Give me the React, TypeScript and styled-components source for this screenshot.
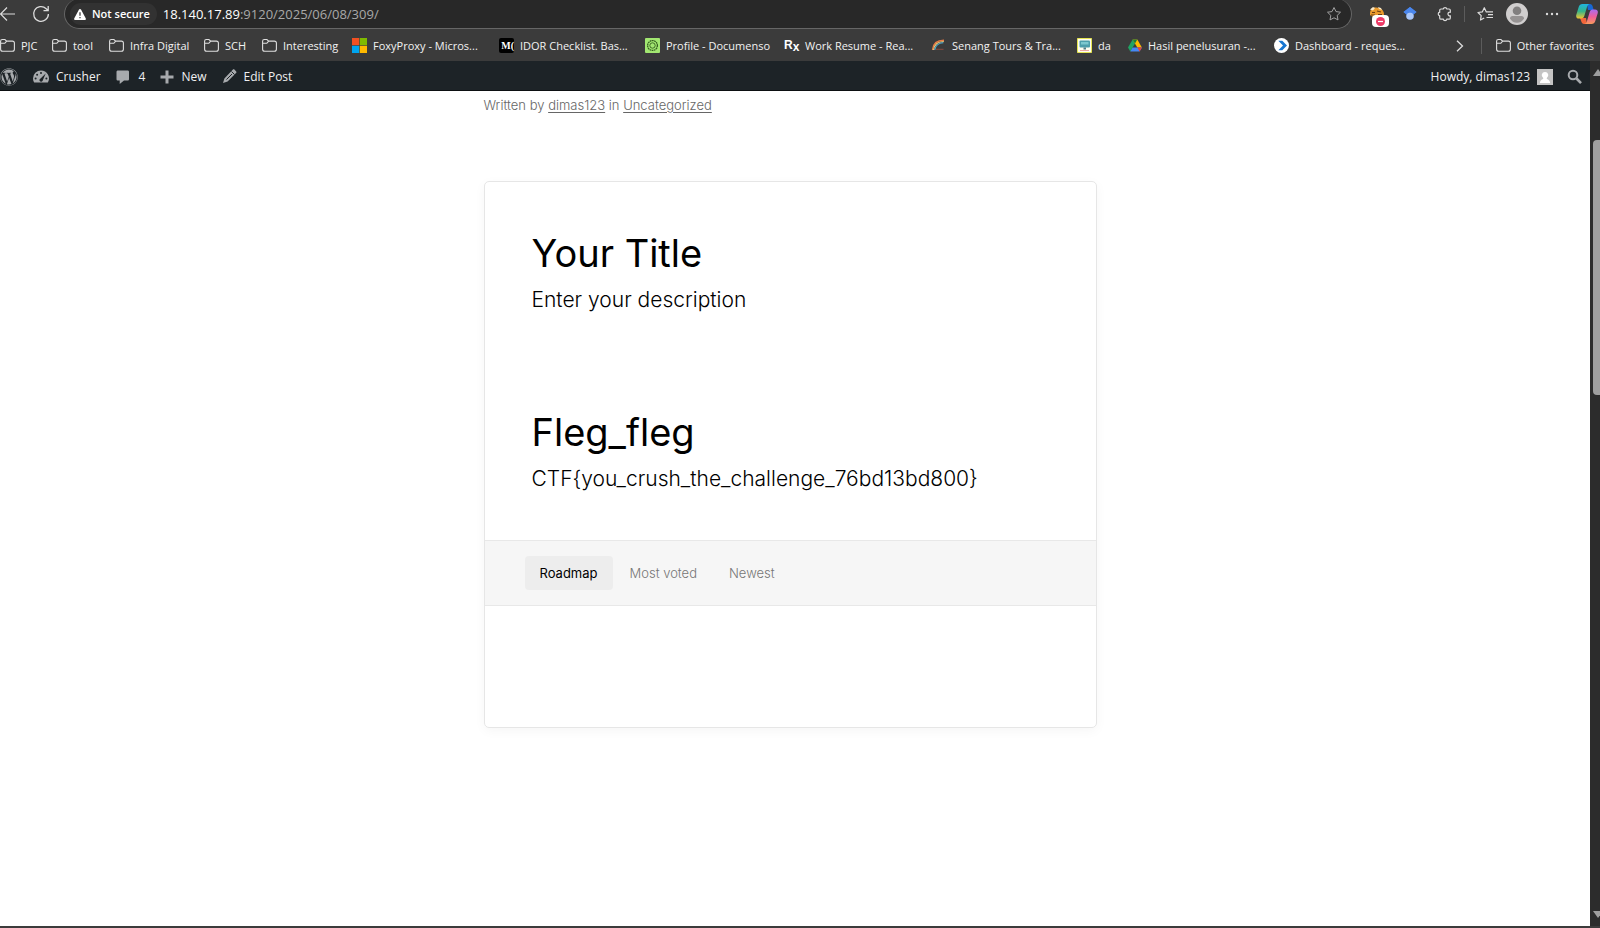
import React from "react";
import styled, { createGlobalStyle } from "styled-components";
import { FaWordpress } from "react-icons/fa";

const GlobalStyle = createGlobalStyle`
  *, *::before, *::after { box-sizing: border-box; }
  body { margin: 0; background: #fff; overflow: hidden; }
  button, input { font: inherit; color: inherit; }
  a { color: inherit; text-decoration: none; }
  h2, p { margin: 0; font-weight: inherit; }
  svg { display: block; flex: none; }
`;

const ui = `"Open Sans", "Noto Sans", sans-serif`;

const Shell = styled.div`
  display: flex;
  flex-direction: column;
  height: 100vh;
  overflow: hidden;
  background: #3b3b3b;
  color: #f2f2f2;
  font-family: ${ui};
  font-size: 11px;
  line-height: 16px;
`;

const Toolbar = styled.div`
  display: flex;
  align-items: flex-start;
  height: 28px;
  flex: none;
`;

const IconButton = styled.button<{ $w: number }>`
  display: flex;
  align-items: center;
  justify-content: center;
  flex: none;
  width: ${(p) => p.$w}px;
  height: 28px;
  padding: 0;
  border: 0;
  background: none;
  color: #dcdcdc;
`;

const AddressBar = styled.form`
  display: flex;
  align-items: center;
  flex: 1;
  height: 30px;
  margin: -1px 0 0 7px;
  padding: 1px 9px 0 5px;
  border: 1px solid #666;
  border-top: 0;
  border-radius: 15px;
  background: #282828;
`;

const Security = styled.button`
  display: flex;
  align-items: center;
  gap: 6px;
  height: 22px;
  padding: 0 7px 0 4px;
  border: 0;
  border-radius: 11px;
  background: #323232;
  color: #fff;
  font-size: 11px;
  font-weight: 600;
`;

const Url = styled.div`
  flex: 1;
  margin-left: 6px;
  color: #a8a8a8;
  font-size: 13px;
  b { color: #fff; font-weight: 400; }
`;

const Divider = styled.span`
  flex: none;
  width: 1px;
  height: 16px;
  background: #5c5c5c;
`;

const ToolbarEnd = styled.div`
  display: flex;
  align-items: center;
  height: 28px;
  padding-left: 8px;
`;

const Extension = styled(IconButton)`
  position: relative;
`;

const Badge = styled.span`
  position: absolute;
  left: 12px;
  top: 15px;
  display: flex;
  justify-content: center;
  align-items: center;
  width: 17px;
  height: 12px;
  border-radius: 4px;
  background: #fff;
`;

const Bookmarks = styled.nav`
  display: flex;
  align-items: center;
  flex: none;
  height: 33px;
  padding: 2px 6px 0 0;
`;

const BookmarkList = styled.div`
  display: flex;
  flex: 1;
  gap: 15px;
  min-width: 0;
  overflow: hidden;
`;

const Bookmark = styled.a<{ $w?: number }>`
  display: flex;
  align-items: center;
  flex: none;
  gap: 6px;
  width: ${(p) => (p.$w ? p.$w + "px" : "auto")};
  white-space: nowrap;
`;

const MediumMark = styled.span`
  flex: none;
  width: 15px;
  height: 15px;
  border-radius: 2px;
  background: #000;
  color: #fff;
  font: 700 10px/15px "Liberation Serif", serif;
  text-align: right;
`;

const RxMark = styled.span`
  flex: none;
  width: 15px;
  color: #fff;
  font: 700 12px/15px "Liberation Sans", sans-serif;
  sub { font-size: 12px; line-height: 8px; vertical-align: -2px; }
`;

const Viewport = styled.div`
  display: flex;
  flex: 1;
  min-height: 0;
  border-bottom: 2px solid #3c3c3c;
`;

const Page = styled.div`
  flex: 1;
  min-width: 0;
  background: #fff;
  color: #000;
  font-family: Inter, sans-serif;
`;

const AdminBar = styled.header`
  display: flex;
  align-items: center;
  justify-content: space-between;
  height: 30px;
  padding: 2px 7px 0 0;
  border-bottom: 1px solid #0c0f12;
  background: #1d2327;
  color: #f0f0f1;
  font: 12px/16px ${ui};
`;

const AdminGroup = styled.div<{ $gap: number }>`
  display: flex;
  align-items: center;
  gap: ${(p) => p.$gap}px;
`;

const AdminLink = styled.a<{ $gap?: number }>`
  display: flex;
  align-items: center;
  gap: ${(p) => p.$gap ?? 7}px;
  svg { color: #a7aaad; }
`;

const Article = styled.main`
  width: 100%;
  max-width: 623px;
  margin: 0 auto;
  padding-right: 10px;
`;

const Byline = styled.p`
  padding-top: 4px;
  color: #666;
  font-size: 13px;
  font-weight: 300;
  line-height: 20px;
  a { text-decoration: underline; text-underline-offset: 2px; }
`;

const Card = styled.section`
  margin-top: 66px;
  border: 1px solid #e6e6e6;
  border-radius: 5px;
  box-shadow: 0 3px 12px rgba(0, 0, 0, 0.04);
`;

const Intro = styled.div`
  display: grid;
  gap: 86px;
  padding: 46px 47px 40px;
`;

const Title = styled.h2`
  font-size: 38px;
  font-weight: 400;
  line-height: 51px;
`;

const Description = styled.p`
  font-size: 21px;
  font-weight: 300;
  line-height: 42px;
`;

const Tabs = styled.div`
  display: flex;
  align-items: center;
  gap: 2px;
  height: 66px;
  padding-left: 40px;
  border: solid #e8e8e8;
  border-width: 1px 0;
  background: #f6f6f6;
`;

const Tab = styled.button<{ $active?: boolean }>`
  height: 34px;
  padding: 0 15px;
  border: 0;
  border-radius: 4px;
  background: ${(p) => (p.$active ? "#ededed" : "none")};
  color: ${(p) => (p.$active ? "#000" : "#777")};
  font-size: 13px;
  font-weight: ${(p) => (p.$active ? 400 : 300)};
`;

const Panel = styled.div`
  height: 121px;
`;

const Scrollbar = styled.div`
  display: flex;
  flex-direction: column;
  align-items: flex-start;
  flex: none;
  width: 10px;
  padding: 8px 0 8px 3px;
  overflow: hidden;
  background: #2c2c2c;
`;

const Thumb = styled.div`
  width: 7px;
  height: 30%;
  margin: 64px 0 auto;
  border-radius: 4px 0 0 4px;
  background: #9f9f9f;
`;

const Folder = () => (
  <svg width="15" height="15" viewBox="0 0 15 15" fill="none" stroke="#dedede" strokeWidth="1.1">
    <path d="M.6 3.2c0-1.100.7-1.700 1.700-1.700h2.600l1.800 1.600h5.600c1.200 0 2.100.8 2.100 2v6.100c0 1.200-.9 2-2.100 2H2.700c-1.200 0-2.100-.8-2.100-2zM.6 5.300h4.200l1.900-2.200" />
  </svg>
);
const Microsoft = () => (
  <svg width="15" height="15" viewBox="0 0 15 15">
    <path fill="#f25022" d="M0 0h7.200v7.200H0z" /><path fill="#7fba00" d="M7.800 0H15v7.200H7.800z" />
    <path fill="#00a4ef" d="M0 7.800h7.200V15H0z" /><path fill="#ffb900" d="M7.800 7.800H15V15H7.800z" />
  </svg>
);
const Documenso = () => (
  <svg width="15" height="15" viewBox="0 0 15 15" fill="none" stroke="#355e20">
    <rect width="15" height="15" rx="1" fill="#a2e771" stroke="none" />
    <circle cx="7.500" cy="7.500" r="4.900" strokeWidth="1.300" strokeDasharray="1.700 .5" />
    <circle cx="7.500" cy="7.500" r="2.700" strokeWidth=".9" />
  </svg>
);
const Rainbow = () => (
  <svg width="15" height="15" viewBox="0 0 15 15" fill="none">
    <path d="M1.500 12C2 6 6 2.300 13 2.300" stroke="#e97a45" strokeWidth="1.400" />
    <path d="M2.600 12C3.200 7 7 3.600 12.800 3.500" stroke="#f2d27a" strokeWidth="1.200" />
    <path d="M3.700 12C4.200 8 7.500 4.900 12.300 4.600" stroke="#4fa5c9" strokeWidth="1.200" />
    <path d="M5 11.300h7.500" stroke="#8b4a40" />
  </svg>
);
const Monitor = () => (
  <svg width="15" height="15" viewBox="0 0 15 15">
    <path fill="#fffdf0" stroke="#e4e450" d="M.5.5h14v14H.500z" />
    <rect x="2.500" y="2.500" width="10.500" height="7" rx="1" fill="#4d9fac" />
    <path fill="#7cc8cf" d="M4 4h7.500v2.500H4z" /><path fill="#517d86" d="M6.500 9.500h2.500v2h-2.500z" />
    <path fill="#eba7a2" d="M3 12h9v1H3z" />
  </svg>
);
const Drive = () => (
  <svg width="14" height="15" viewBox="0 0 14 15">
    <path fill="#1fa463" d="M4.600 1.500 0 9.400l2.300 4L7 5.500z" /><path fill="#ffba00" d="M4.600 1.500h4.700l4.600 8H9.300z" />
    <path fill="#4688f4" d="M4.600 9.500h9.300l-2.300 4H2.300z" /><path fill="#ea4335" d="M9.300 9.500h4.600l-2.300 4z" />
    <path fill="#188038" d="M4.600 1.500h4.700L7 5.500z" />
  </svg>
);
const BlueArrow = () => (
  <svg width="15" height="15" viewBox="0 0 15 15">
    <circle cx="7.500" cy="7.500" r="7.500" fill="#fff" />
    <path fill="#1675d1" d="M4.300 2.800h4L13 7.500l-4.700 4.700h-4L9 7.500z" />
  </svg>
);
const Warning = () => (
  <svg width="12" height="11" viewBox="0 0 12 11">
    <path fill="#fff" d="M6 0c.5 0 .8.200 1 .6l4.700 8.700c.4.800 0 1.700-1 1.700H1.300c-1 0-1.400-.9-1-1.700L5 .6c.2-.4.500-.6 1-.6z" />
    <path stroke="#323232" strokeWidth="1.200" d="M6 3.300v3.400M6 8v1.300" />
  </svg>
);
const starPath = "M8 1.500l2 4.100 4.500.6-3.300 3.200.8 4.500L8 11.800l-4 2.100.8-4.500L1.500 6.200 6 5.600z";
const Star = () => (
  <svg width="16" height="16" viewBox="0 0 16 16" fill="none" stroke="#a0a0a0" strokeLinejoin="round"><path d={starPath} /></svg>
);

const bookmarks: { label: string; icon: React.ReactNode; width?: number }[] = [
  { label: "PJC", icon: <Folder />, width: 37 },
  { label: "tool", icon: <Folder />, width: 42 },
  { label: "Infra Digital", icon: <Folder />, width: 80 },
  { label: "SCH", icon: <Folder />, width: 43 },
  { label: "Interesting", icon: <Folder />, width: 75 },
  { label: "FoxyProxy - Micros...", icon: <Microsoft />, width: 132 },
  { label: "IDOR Checklist. Bas...", icon: <MediumMark aria-hidden="true">M(</MediumMark>, width: 131 },
  { label: "Profile - Documenso", icon: <Documenso />, width: 124 },
  { label: "Work Resume - Rea...", icon: <RxMark>R<sub>x</sub></RxMark>, width: 132 },
  { label: "Senang Tours & Tra...", icon: <Rainbow />, width: 131 },
  { label: "da", icon: <Monitor />, width: 36 },
  { label: "Hasil penelusuran -...", icon: <Drive />, width: 131 },
  { label: "Dashboard - reques...", icon: <BlueArrow />, width: 131 },
];

const sections = [
  { title: "Your Title", text: "Enter your description" },
  { title: "Fleg_fleg", text: "CTF{you_crush_the_challenge_76bd13bd800}" },
];

export default function App() {
  return (
    <>
      <GlobalStyle />
      <Shell>
        <Toolbar>
          <IconButton $w={24} aria-label="Back">
            <svg width="24" height="16" viewBox="0 0 24 16" fill="none" stroke="currentColor" strokeWidth="1.200"><path d="M15 8H0M7 1.500.5 8 7 14.500" /></svg>
          </IconButton>
          <IconButton $w={33} aria-label="Refresh">
            <svg width="18" height="18" viewBox="0 0 18 18" fill="none" stroke="currentColor" strokeWidth="1.300"><path d="M16.400 9A7.400 7.400 0 1 1 14.200 3.700L16 5.500M16.200 1v4.700h-4.700" /></svg>
          </IconButton>
          <AddressBar>
            <Security type="button"><Warning />Not secure</Security>
            <Url><b>18.140.17.89</b>:9120/2025/06/08/309/</Url>
            <Star />
          </AddressBar>
          <ToolbarEnd>
            <Extension $w={34} aria-label="Cookie extension">
              <svg width="16" height="16" viewBox="0 0 16 16">
                <path fill="#e99a2c" d="M1 7c0-3 2-5.500 6-5.500 5 0 8 3 8 7l-2 3H5L1 9z" />
                <path fill="#f6e7c8" d="M1 3.500 4 1l2 1-2 2.500zM9 1l3 1 1 2-3-1z" />
                <path stroke="#6b3c12" strokeWidth="1.200" d="M3 6.500h3M8 5l4 1M2 9h4M9 8.500h4" />
              </svg>
              <Badge>
                <svg width="9" height="9" viewBox="0 0 9 9"><circle cx="4.500" cy="4.500" r="4.500" fill="#ee3a67" /><path stroke="#fff" strokeWidth="1.200" d="M2 4.500h5" /></svg>
              </Badge>
            </Extension>
            <IconButton $w={32} aria-label="Scholar">
              <svg width="14" height="14" viewBox="0 0 14 14"><path fill="#3f7be0" d="M7 0l6.500 5L7 10 .5 5z" /><circle cx="7" cy="9" r="3.800" fill="#a9c7fa" /><path fill="#4a86ec" d="M7 0l6.500 5-3 2.500a4 4 0 0 0-7 0L.5 5z" /></svg>
            </IconButton>
            <IconButton $w={38} aria-label="Extensions">
              <svg width="16" height="16" viewBox="0 0 16 16" fill="none" stroke="currentColor" strokeWidth="1.200"><path d="M4 3h2.200a1.900 1.900 0 0 1 3.700 0H12c.8 0 1.300.5 1.300 1.300v1.900a1.900 1.900 0 1 0 0 3.700v2c0 .8-.5 1.300-1.300 1.300H9.900a1.900 1.900 0 0 1-3.700 0H4c-.8 0-1.300-.5-1.300-1.300v-2a1.900 1.900 0 0 1 0-3.700V4.300C2.700 3.500 3.200 3 4 3z" /></svg>
            </IconButton>
            <Divider />
            <IconButton $w={40} aria-label="Favorites">
              <svg width="17" height="16" viewBox="0 0 17 16" fill="none" stroke="currentColor" strokeWidth="1.200" strokeLinejoin="round"><path d="M7.200 12l-3.700 2 .7-4.300L1 6.500l4.300-.6 2-4.200 2 4.200H16M11 8.700h5M9.500 11.500H16" /></svg>
            </IconButton>
            <IconButton $w={24} aria-label="Profile">
              <svg width="22" height="22" viewBox="0 0 22 22"><circle cx="11" cy="11" r="11" fill="#d0cece" /><circle cx="11" cy="7.800" r="4.300" fill="#817f7f" /><path fill="#969393" d="M4 15.500c0-1.500 1-2.500 2.500-2.500h9c1.500 0 2.500 1 2.500 2.500-1.500 2.800-4 4.200-7 4.200s-5.500-1.400-7-4.200z" /></svg>
            </IconButton>
            <IconButton $w={45} aria-label="Menu">
              <svg width="14" height="4" viewBox="0 0 14 4" fill="currentColor"><circle cx="2" cy="2" r="1.200" /><circle cx="7" cy="2" r="1.200" /><circle cx="12" cy="2" r="1.200" /></svg>
            </IconButton>
            <IconButton $w={26} aria-label="Copilot">
              <svg width="22" height="20" viewBox="0 0 22 20">
                <defs>
                  <linearGradient id="cpa" x1="0" y1="0" x2="0" y2="1"><stop offset="0" stopColor="#1fb4e0" /><stop offset=".5" stopColor="#35b58a" /><stop offset="1" stopColor="#f4c531" /></linearGradient>
                  <linearGradient id="cpb" x1="0" y1="0" x2="0" y2="1"><stop offset="0" stopColor="#a96bf0" /><stop offset=".5" stopColor="#ef5f9a" /><stop offset="1" stopColor="#f89a5c" /></linearGradient>
                </defs>
                <path fill="#1767d4" d="M11 0h3c1.500 0 2.200 1 2.700 2.500l1 3.500H12z" />
                <path fill="#f2663b" d="M4 14h6l1 6H8c-1.500 0-2.200-1-2.700-2.500z" />
                <path fill="url(#cpa)" d="M6.500 0h7c-1.500.5-2 1.500-2.500 3L8.300 12c-.5 1.500-1.300 2.500-3 2.500H3c-2.300 0-3.300-1.500-2.700-3.800L2.700 3C3.300 1 4.500 0 6.500 0z" />
                <path fill="url(#cpb)" d="M15.500 20h-7c1.500-.5 2-1.500 2.500-3l2.700-9c.5-1.500 1.300-2.500 3-2.500H19c2.300 0 3.300 1.500 2.700 3.800L19.300 17c-.6 2-1.800 3-3.800 3z" />
              </svg>
            </IconButton>
          </ToolbarEnd>
        </Toolbar>
        <Bookmarks aria-label="Favorites bar">
          <BookmarkList>
            {bookmarks.map((b) => (
              <Bookmark href="#" key={b.label} $w={b.width}>{b.icon}<span>{b.label}</span></Bookmark>
            ))}
          </BookmarkList>
          <IconButton $w={42} aria-label="More favorites">
            <svg width="8" height="12" viewBox="0 0 8 12" fill="none" stroke="currentColor" strokeWidth="1.300"><path d="M1 .7 6.500 6 1 11.300" /></svg>
          </IconButton>
          <Divider />
          <IconButton as="span" $w={14} />
          <Bookmark href="#"><Folder /><span>Other favorites</span></Bookmark>
        </Bookmarks>
        <Viewport>
          <Page>
            <AdminBar>
              <AdminGroup $gap={15}>
                <AdminLink href="#" aria-label="WordPress"><FaWordpress size={18} /></AdminLink>
                <AdminLink href="#">
                  <svg width="16" height="16" viewBox="0 0 16 16"><path fill="currentColor" d="M8 1.500a8 8 0 0 0-8 8c0 1.500.4 2.900 1.200 4.100h13.600A8 8 0 0 0 8 1.500z" /><g fill="#1d2327"><circle cx="8" cy="4" r="1" /><circle cx="4.100" cy="5.700" r="1" /><circle cx="2.600" cy="9.500" r="1" /><circle cx="13.400" cy="9.500" r="1" /><path d="M12.700 4.500 9.500 12a1.700 1.700 0 0 1-3-1.500z" /></g></svg>
                  Crusher
                </AdminLink>
                <AdminLink href="#" $gap={9}>
                  <svg width="14" height="16" viewBox="0 0 14 16"><path fill="currentColor" d="M2 1.500h9.500c1 0 1.500.5 1.500 1.500v7c0 1-.5 1.500-1.500 1.500H8L3.700 15v-3.500H2c-1 0-1.500-.5-1.500-1.500V3c0-1 .5-1.500 1.500-1.500z" /></svg>
                  4
                </AdminLink>
                <AdminLink href="#">
                  <svg width="14" height="14" viewBox="0 0 14 14"><path stroke="currentColor" strokeWidth="3" d="M7 .5v13M.5 7h13" /></svg>
                  New
                </AdminLink>
                <AdminLink href="#">
                  <svg width="15" height="15" viewBox="0 0 15 15"><path fill="currentColor" d="M10.700.8c.6-.6 1.300-.6 1.900 0L14 2.200c.6.600.6 1.300 0 1.900L5.600 12.600 1 14l1.400-4.600z" /><path stroke="#1d2327" strokeWidth="1" fill="none" d="M9.500 2.500 12.500 5.500M4.500 10.500l5.500-5.500" /></svg>
                  Edit Post
                </AdminLink>
              </AdminGroup>
              <AdminGroup $gap={14}>
                <AdminLink href="#">
                  Howdy, dimas123
                  <svg width="16" height="16" viewBox="0 0 16 16"><path fill="#c4c4c4" d="M0 0h16v16H0z" /><path fill="#fff" d="M8 3a3.200 3.200 0 0 1 1.800 5.900v1c2 .6 3 1.700 3.400 4.100H2.800c.4-2.400 1.400-3.500 3.400-4.100v-1A3.200 3.200 0 0 1 8 3z" /></svg>
                </AdminLink>
                <AdminLink href="#" aria-label="Search">
                  <svg width="16" height="16" viewBox="0 0 16 16" fill="none" stroke="currentColor"><circle cx="6" cy="6" r="4.300" strokeWidth="2" /><path strokeWidth="2.600" d="m9.500 9.500 4.500 4.700" /></svg>
                </AdminLink>
              </AdminGroup>
            </AdminBar>
            <Article>
              <Byline>Written by <a href="#">dimas123</a> in <a href="#">Uncategorized</a></Byline>
              <Card>
                <Intro>
                  {sections.map((s) => (
                    <div key={s.title}>
                      <Title>{s.title}</Title>
                      <Description>{s.text}</Description>
                    </div>
                  ))}
                </Intro>
                <Tabs role="tablist">
                  <Tab role="tab" aria-selected="true" $active>Roadmap</Tab>
                  <Tab role="tab" aria-selected="false">Most voted</Tab>
                  <Tab role="tab" aria-selected="false">Newest</Tab>
                </Tabs>
                <Panel role="tabpanel" />
              </Card>
            </Article>
          </Page>
          <Scrollbar>
            <svg width="10" height="7" viewBox="0 0 10 7"><path fill="#9f9f9f" d="M5 0l5 7H0z" /></svg>
            <Thumb />
            <svg width="10" height="7" viewBox="0 0 10 7"><path fill="#9f9f9f" d="M5 7l5-7H0z" /></svg>
          </Scrollbar>
        </Viewport>
      </Shell>
    </>
  );
}
